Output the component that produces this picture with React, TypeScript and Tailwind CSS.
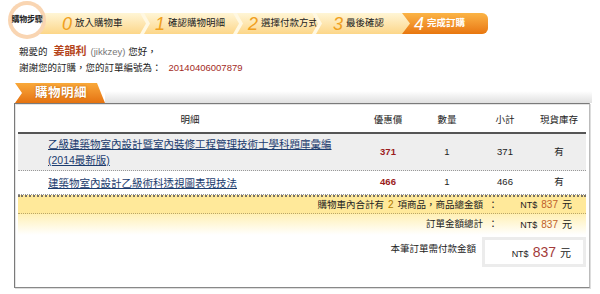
const font = "font-['Liberation_Sans','Noto_Sans_CJK_TC',sans-serif]";

function Chevron() {
    return (
        <svg width="10" height="21" viewBox="0 0 10 21" className="shrink-0">
            <path d="M0 0 L4 0 L10 10.5 L4 21 L0 21 L6 10.5 Z" fill="#fff8e2" />
        </svg>
    );
}

function Step({ n, label, w, pl }: { n: string; label: string; w: string; pl: string }) {
    return (
        <div className={`flex items-center h-full ${w} ${pl}`}>
            <span className="italic text-[18px] leading-none text-[#f0a020] mr-[3px]">{n}</span>
            <span className="text-[9.5px] text-[#222] whitespace-nowrap">{label}</span>
        </div>
    );
}

function StepBar() {
    return (
        <div className="flex items-start h-[40px] pt-[1px]">
            <div className="relative z-10 ml-[8px] w-[38px] h-[38px] rounded-full bg-[#f9d5b2] p-[4px] shrink-0">
                <div className="w-full h-full rounded-full bg-white flex items-center justify-center">
                    <span className="text-[8px] font-bold text-[#222] whitespace-nowrap tracking-[-0.3px]">購物步驟</span>
                </div>
            </div>
            <div className="-ml-[6px] mt-[12px] h-[21px] w-[448px] flex bg-gradient-to-b from-[#fff6d6] to-[#fcd688] rounded-r-[6px]">
                <Step n="0" label="放入購物車" w="w-[100px]" pl="pl-[22px]" />
                <Chevron />
                <Step n="1" label="確認購物明細" w="w-[83px]" pl="pl-[5px]" />
                <Chevron />
                <Step n="2" label="選擇付款方式" w="w-[69px]" pl="pl-[5px]" />
                <Chevron />
                <Step n="3" label="最後確認" w="w-[80px]" pl="pl-[11px]" />
                <div className="flex items-center h-full w-[86px] pl-[12px] rounded-r-[6px] bg-gradient-to-b from-[#fbb445] to-[#e8760c] [clip-path:polygon(0_0,100%_0,100%_100%,0_100%,8px_50%)]">
                    <span className="italic text-[18px] leading-none text-white mr-[3px]">4</span>
                    <span className="text-[9.5px] text-white font-bold whitespace-nowrap">完成訂購</span>
                </div>
            </div>
        </div>
    );
}

function Greeting() {
    return (
        <div className="pl-[19px] pt-[3px] text-[9.5px] leading-[16px] text-[#222]">
            <div className="flex items-baseline">
                <span>親愛的</span>
                <span className="ml-[6px] text-[11px] font-bold text-[#b5451b]">姜韻利</span>
                <span className="ml-[4px] text-[9.5px] text-[#777]">(jikkzey)</span>
                <span className="ml-[3px]">您好，</span>
            </div>
            <div className="flex items-baseline">
                <span>謝謝您的訂購，您的訂單編號為：</span>
                <span className="ml-[7px] text-[9.5px] text-[#a32b1e]">20140406007879</span>
            </div>
        </div>
    );
}

const cols = 'grid grid-cols-[344px_52px_66px_50px_58px]';

function ItemRow({ lines, price, qty, sub, stock, bg, h }: { lines: string[]; price: string; qty: string; sub: string; stock: string; bg: string; h: string }) {
    return (
        <div className={`${cols} ${bg} ${h} items-center border-b border-dotted border-[#999]`}>
            <div className="pl-[30px] flex flex-col leading-[16px]">
                {lines.map(l => (
                    <a key={l} href="#" className="text-[10.5px] text-[#1b3c6e] underline whitespace-nowrap">{l}</a>
                ))}
            </div>
            <div className="text-center text-[9.5px] font-bold text-[#9b1c1c]">{price}</div>
            <div className="text-center text-[9.5px]">{qty}</div>
            <div className="text-center text-[9.5px]">{sub}</div>
            <div className="text-center text-[9.5px]">{stock}</div>
        </div>
    );
}

function Amount({ big }: { big?: boolean }) {
    return (
        <span className="flex items-baseline gap-[4px]">
            <span className="text-[9px] text-[#222]">NT$</span>
            <span className={big ? 'text-[14px] text-[#a33b3b]' : 'text-[10px] text-[#c0602a]'}>837</span>
            <span className={big ? 'text-[11px] text-[#222]' : 'text-[10px] text-[#222]'}>元</span>
        </span>
    );
}

function Section() {
    return (
        <div className="mt-[7px]">
            <div className="flex items-end h-[20px]">
                <div className="ml-[15px] w-[90px] h-[20px] flex items-center pl-[20px] bg-gradient-to-b from-[#f9a93a] to-[#e5720e] [clip-path:polygon(0_0,calc(100%-8px)_0,100%_100%,0_100%,7px_50%)]">
                    <span className="text-[12.5px] font-bold text-white [text-shadow:0_0_2px_#b85a00] tracking-[0.5px]">購物明細</span>
                </div>
                <div className="flex-1 h-[12px] mr-[8px] bg-gradient-to-b from-white to-[#e0e0e0]" />
            </div>
            <div className="ml-[14px] w-[576px] h-[185px] border border-[#7a7a7a] border-r-[#bbb] border-b-[#888] shadow-[inset_1px_1px_0_#e4e4e4,1px_1px_0_#ddd] px-[3px] text-[#222]">
                <div className={`${cols} h-[30px] items-end pb-[5px] text-[9.5px] border-b-2 border-[#555]`}>
                    <div className="text-center">明細</div>
                    <div className="text-center">優惠價</div>
                    <div className="text-center">數量</div>
                    <div className="text-center">小計</div>
                    <div className="text-center">現貨庫存</div>
                </div>
                <ItemRow
                    lines={['乙級建築物室內設計暨室內裝修工程管理技術士學科題庫彙編', '(2014最新版)']}
                    price="371" qty="1" sub="371" stock="有" bg="bg-[#eeeeee]" h="h-[37px]"
                />
                <ItemRow
                    lines={['建築物室內設計乙級術科透視圖表現技法']}
                    price="466" qty="1" sub="466" stock="有" bg="bg-white" h="h-[24px]"
                />
                <div className="border-t-2 border-[#7a7262] h-[19px] bg-[#ffe99a] flex items-center border-b border-b-[#b9a66a] border-dotted text-[9.5px]">
                    <div className="flex-1 text-right flex justify-end items-baseline">
                        購物車內合計有<span className="mx-[4px] text-[10px] text-[#b07a00]">2</span>項商品，商品總金額
                    </div>
                    <div className="w-[20px] text-center">：</div>
                    <div className="w-[83px] flex justify-end pr-[14px]"><Amount /></div>
                </div>
                <div className="h-[21px] bg-gradient-to-b from-[#fff0b5] to-white flex items-center text-[9.5px]">
                    <div className="flex-1 text-right">訂單金額總計</div>
                    <div className="w-[20px] text-center">：</div>
                    <div className="w-[83px] flex justify-end pr-[14px]"><Amount /></div>
                </div>
                <div className="flex items-start pt-[2px] text-[9.5px]">
                    <div className="flex-1 text-right pr-[6px] pt-[5px]">本筆訂單需付款金額</div>
                    <div className="w-[104px] h-[30px] border-[3px] border-[#ececec] bg-white flex items-center justify-end pr-[12px]">
                        <Amount big />
                    </div>
                </div>
            </div>
        </div>
    );
}

export default function App() {
    return (
        <div className={`w-[600px] h-[294px] bg-white overflow-hidden ${font}`}>
            <StepBar />
            <Greeting />
            <Section />
        </div>
    );
}
